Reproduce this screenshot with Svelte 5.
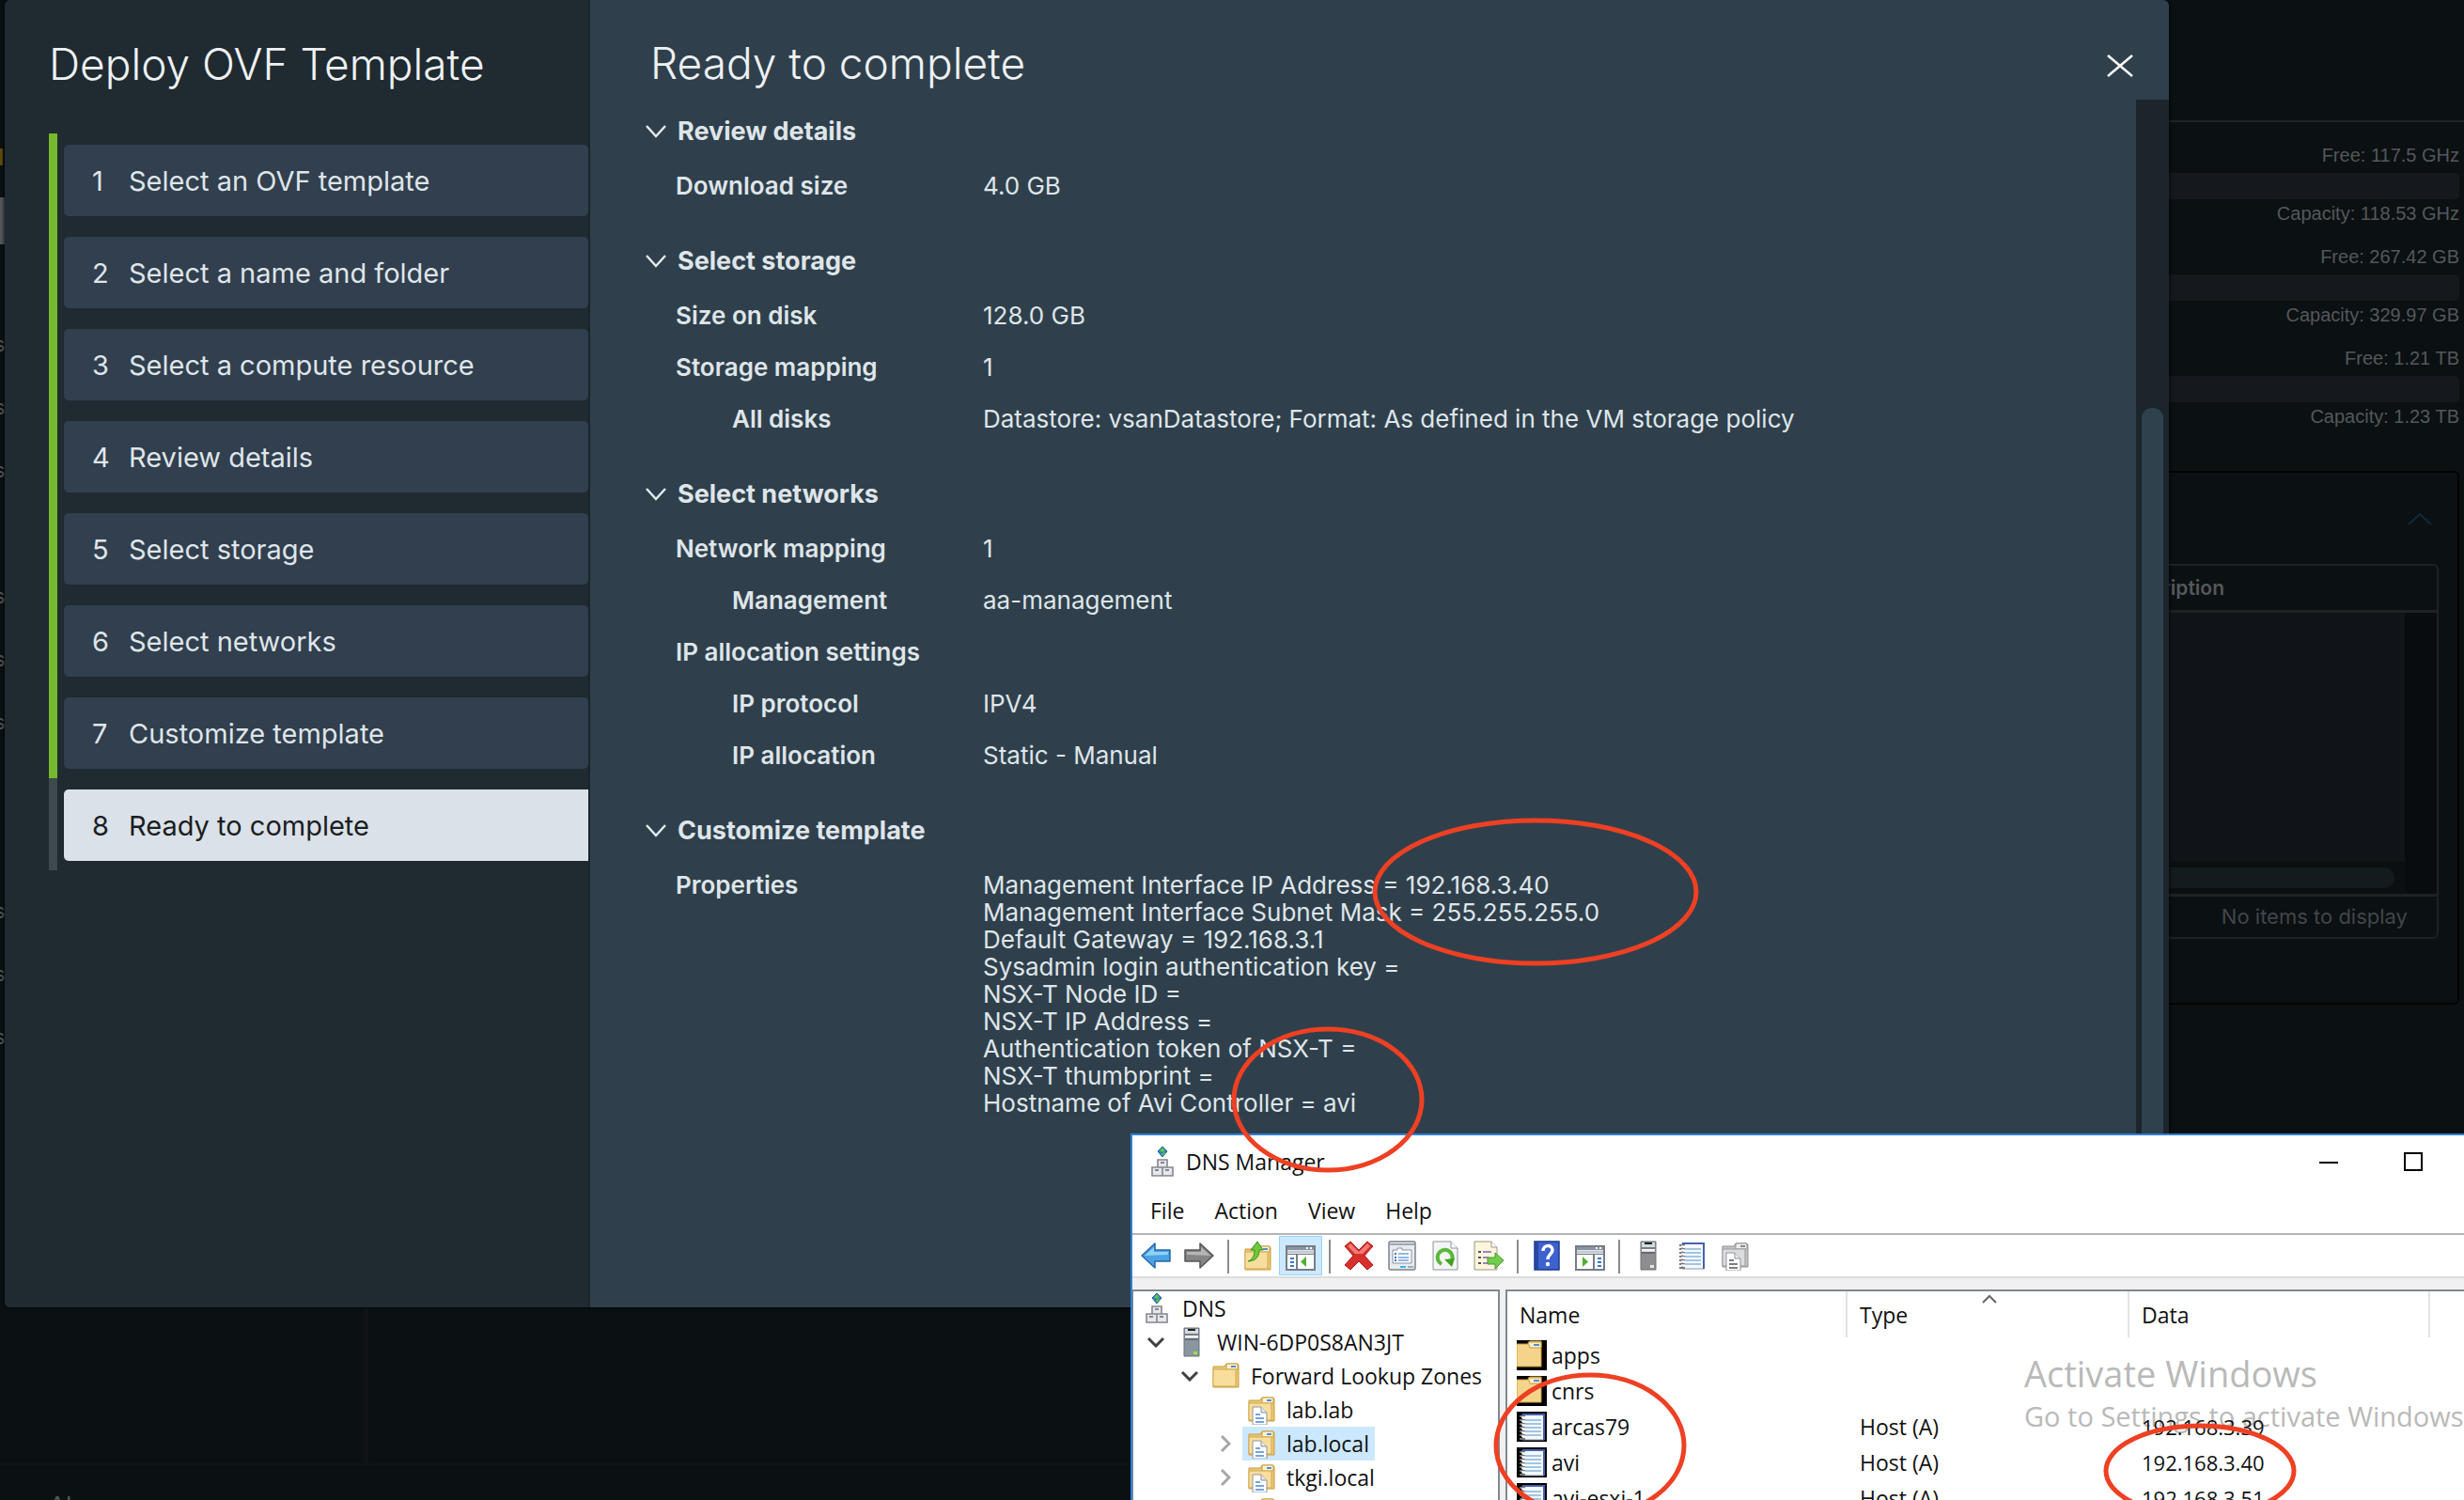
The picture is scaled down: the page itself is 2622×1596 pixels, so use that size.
<script>
  const steps = [
    'Select an OVF template',
    'Select a name and folder',
    'Select a compute resource',
    'Review details',
    'Select storage',
    'Select networks',
    'Customize template',
    'Ready to complete'
  ];
  let current = $state(8);

  const sections = [
    { title: 'Review details', rows: [{ label: 'Download size', value: ['4.0 GB'] }] },
    {
      title: 'Select storage',
      rows: [
        { label: 'Size on disk', value: ['128.0 GB'] },
        { label: 'Storage mapping', value: ['1'] },
        { label: 'All disks', nested: true, value: ['Datastore: vsanDatastore; Format: As defined in the VM storage policy'] }
      ]
    },
    {
      title: 'Select networks',
      rows: [
        { label: 'Network mapping', value: ['1'] },
        { label: 'Management', nested: true, value: ['aa-management'] },
        { label: 'IP allocation settings', value: [] },
        { label: 'IP protocol', nested: true, value: ['IPV4'] },
        { label: 'IP allocation', nested: true, value: ['Static - Manual'] }
      ]
    },
    {
      title: 'Customize template',
      rows: [
        {
          label: 'Properties',
          value: [
            'Management Interface IP Address = 192.168.3.40',
            'Management Interface Subnet Mask = 255.255.255.0',
            'Default Gateway = 192.168.3.1',
            'Sysadmin login authentication key =',
            'NSX-T Node ID =',
            'NSX-T IP Address =',
            'Authentication token of NSX-T =',
            'NSX-T thumbprint =',
            'Hostname of Avi Controller = avi'
          ]
        }
      ]
    }
  ];

  const inventory = ['s', 's', 's', '', 's', 's', 's', '', '', 's', 's', 's'];
  const usage = [
    { free: '117.5 GHz', capacity: '118.53 GHz' },
    { free: '267.42 GB', capacity: '329.97 GB' },
    { free: '1.21 TB', capacity: '1.23 TB' }
  ];

  const menus = ['File', 'Action', 'View', 'Help'];
  const toolbar = [
    ['back', 'forward'],
    ['up', 'tree'],
    ['delete', 'properties', 'refresh', 'export'],
    ['help', 'actions'],
    ['server-gray', 'notebook', 'zones-gray']
  ];
  const tree = [
    { level: 0, icon: 'dns', label: 'DNS', mark: '' },
    { level: 1, icon: 'server', label: 'WIN-6DP0S8AN3JT', mark: 'open' },
    { level: 2, icon: 'folder', label: 'Forward Lookup Zones', mark: 'open' },
    { level: 3, icon: 'zone', label: 'lab.lab', mark: '' },
    { level: 3, icon: 'zone', label: 'lab.local', mark: 'closed', selected: true },
    { level: 3, icon: 'zone', label: 'tkgi.local', mark: 'closed' },
    { level: 3, icon: 'zone', label: '', mark: '' }
  ];
  const records = [
    { icon: 'row-folder', name: 'apps', type: '', data: '' },
    { icon: 'row-folder', name: 'cnrs', type: '', data: '' },
    { icon: 'row-note', name: 'arcas79', type: 'Host (A)', data: '192.168.3.39' },
    { icon: 'row-note', name: 'avi', type: 'Host (A)', data: '192.168.3.40' },
    { icon: 'row-note', name: 'avi-esxi-1', type: 'Host (A)', data: '192.168.3.51' }
  ];
</script>

{#snippet folderShape(x, y, gray)}
  <g transform="translate({x} {y})">
    <path d="M2 5h12l2-3h11a2 2 0 0 1 2 2v23H2z" fill={gray ? '#c4c4c4' : '#eac875'} stroke={gray ? '#8f8f8f' : '#c79a3e'} />
    <rect x="16" y="2" width="12" height="6" rx="1" fill={gray ? '#eee' : '#fff3cf'} stroke={gray ? '#8f8f8f' : '#c79a3e'} />
    <rect x="21" y="4" width="5" height="2" fill={gray ? '#888' : '#4b8fdc'} />
    <path d="M2 8h24v18H2z" fill={gray ? '#dcdcdc' : '#f8de9c'} stroke={gray ? '#9a9a9a' : '#d2a850'} />
  </g>
{/snippet}

{#snippet noteShape()}
  <path d="M6 3h23v27H6z" fill="#f5f9fe" stroke="#8b93a8" />
  <path d="M6 3h23v27" fill="none" stroke="#4663b0" stroke-width="2" />
  <path d="M9 9h17M9 13h17M9 17h17M9 21h17M9 25h17" stroke="#86b4d8" stroke-width="1.4" />
  <path d="M3 5h6M3 9h6M3 13h6M3 17h6M3 21h6M3 25h6M3 29h6" stroke="#777" stroke-width="2" />
  <path d="M5 6h4M5 10h4M5 14h4M5 18h4M5 22h4M5 26h4" stroke="#fff" stroke-width="1.4" />
{/snippet}

{#snippet pageShape()}
  <path d="M12 12h9l6 6v13H12z" fill="#fff" stroke="#8e949c" />
  <path d="M21 12v6h6" fill="#e5e8ec" stroke="#8e949c" />
{/snippet}

{#snippet icon(name)}
  <svg class="icon" viewBox="0 0 32 32" aria-hidden="true">
    {#if name === 'back'}
      <path d="M1 16 15 3v7h16v12H15v7z" fill="#4ba3e3" stroke="#2668a8" stroke-width="1.5" stroke-linejoin="round" />
      <path d="M4 16 14 7v5h15v3z" fill="#8fd0f7" />
    {:else if name === 'forward'}
      <path d="M31 16 17 3v7H1v12h16v7z" fill="#858585" stroke="#555" stroke-width="1.5" stroke-linejoin="round" />
      <path d="M28 16 18 7v5H3v3z" fill="#b5b5b5" />
    {:else if name === 'up'}
      {@render folderShape(1, 4, false)}
      <path d="M6 22c5-2 7-6 7-12H9l7-9 6 9h-4c0 7-4 12-12 12z" fill="#6cc93d" stroke="#3c8c1d" />
    {:else if name === 'tree' || name === 'actions'}
      <path d="M1 6h30v25H1z" fill="#fff" stroke="#767d88" stroke-width="2" />
      <path d="M2 7h28v3H2z" fill="#8a94a5" />
      <path d="M22 8h2M26 8h2" stroke="#fff" stroke-width="2" />
      <path d="M2 12h28" stroke="#c3c9d2" stroke-width="3" />
      <path d="M2 14.500h28" stroke="#767d88" />
      {#if name === 'tree'}
        <path d="M12 15v15" stroke="#767d88" stroke-width="2" />
        <path d="M5 19h4M5 23h4M5 27h4" stroke="#3577c8" stroke-width="2" />
        <path d="m22 17-6 5.500 6 5.500z" fill="#4fb12b" />
      {:else}
        <path d="M20 15v15" stroke="#767d88" stroke-width="2" />
        <path d="M24 19h4M24 23h4M24 27h4" stroke="#3577c8" stroke-width="2" />
        <path d="m8 17 6 5.500-6 5.500z" fill="#4fb12b" />
      {/if}
    {:else if name === 'delete'}
      <path d="m7 1 9 9 9-9 6 5-9 10 9 10-6 5-9-9-9 9-6-5 9-10L1 6z" fill="#d92f2a" stroke="#a81d1b" stroke-linejoin="round" />
      <path d="m7 3 9 9 9-9 3 3-8 8h-8L4 6z" fill="#ee7c77" />
    {:else if name === 'properties'}
      <rect x="2" y="1" width="28" height="30" rx="2" fill="#e8ebef" stroke="#7c828c" stroke-width="1.500" />
      <path d="M3 4h26" stroke="#9fa7b3" stroke-width="2" />
      <path d="M6 10h5V8h5v2h10v14H6z" fill="#fff" stroke="#8990a0" />
      <path d="M12 14h11M12 18h11M12 21h11" stroke="#6fa0d8" stroke-width="1.500" />
      <path d="M8 14h2M8 18h2M8 21h2" stroke="#3577c8" stroke-width="2" />
      <path d="M14 28h6" stroke="#38b6e8" stroke-width="2" /><path d="M22 28h6" stroke="#a5acb8" stroke-width="2" />
    {:else if name === 'refresh'}
      <path d="M3 1h19l7 7v23H3z" fill="#f4f5f6" stroke="#8e949c" /><path d="M22 1v7h7" fill="#fff" stroke="#8e949c" />
      <path d="M12 25a8 8 0 1 1 11-4" fill="none" stroke="#58b838" stroke-width="4" />
      <path d="m15 20 11-1-3 9z" fill="#43a124" />
    {:else if name === 'export'}
      <path d="M1 1h18l6 6v24H1z" fill="#fbf5dc" stroke="#9c9880" /><path d="M19 1v6h6" fill="#fff" stroke="#9c9880" />
      <path d="M5 12h3M5 18h3M5 24h3" stroke="#555" stroke-width="2" /><path d="M10 12h9M10 18h6M10 24h6" stroke="#9a88c0" stroke-width="2" />
      <path d="M15 18h8v-5l9 8-9 9v-5h-8z" fill="#72ce4d" stroke="#46982a" />
    {:else if name === 'help'}
      <path d="M3 1h26v30H3z" fill="#3d62cf" stroke="#20398c" stroke-width="1.500" /><path d="M4 2h3v28H4z" fill="#2746a5" />
      <path d="M12 11c0-7 10-7 10-1 0 4-5 5-5 10" fill="none" stroke="#fff" stroke-width="3.500" /><circle cx="17" cy="25" r="2.200" fill="#fff" />
    {:else if name === 'server' || name === 'server-gray'}
      <path d="M8 1h16v30H8z" fill={name === 'server' ? '#8996a0' : '#8e8e8e'} stroke="#6a7178" />
      <path d="M9 2h14v10H9z" fill="#d5dade" />
      <path d="M12 3h8" stroke="#222" stroke-width="2" /><path d="M9 8h14M9 13h14" stroke="#5b6066" stroke-width="1.500" />
      <path d="M9 10h14" stroke="#fff" stroke-width="1.500" />
      <rect x="18" y="26" width="4" height="3" fill={name === 'server' ? '#8eea3b' : '#e8e8e8'} />
    {:else if name === 'notebook'}
      {@render noteShape()}
    {:else if name === 'zones-gray' || name === 'zone'}
      {@render folderShape(1, 1, name === 'zones-gray')}
      <g transform="translate(-5 1)">
        {@render pageShape()}
        <path d="M15 20h5M15 24h9M15 28h9" stroke={name === 'zone' ? '#4b86cf' : '#555'} stroke-width="1.600" />
      </g>
    {:else if name === 'folder'}
      {@render folderShape(1, 1, false)}
    {:else if name === 'dns'}
      <path d="m16 0 5 5-5 6-5-6z" fill="#2a86c8" stroke="#1f5d8c" /><path d="m13 4 3-3 3 3-3 2zM15 8l3-2 1 1-3 3z" fill="#5fc83c" />
      <path d="M11 14h10v8H11zM5 22h11v9H5zM16 22h11v9H16z" fill="#e6e7ec" stroke="#85868f" stroke-width="1.600" />
      <path d="M14 17h4M8 25h4M19 25h4" stroke="#85868f" stroke-width="2" />
    {:else if name === 'row-folder'}
      <path d="M0 0h32v32H0z" fill="#000" />
      <path d="M0 4h12l2-3h12v27H0z" fill="#f3d48a" stroke="#c79a3e" />
      <path d="M12 2h14v6H14z" fill="#fff0c6" stroke="#c79a3e" /><path d="M18 5h6" stroke="#4b8fdc" stroke-width="2" />
    {:else if name === 'row-note'}
      <path d="M0 0h32v32H0z" fill="#000" />
      {@render noteShape()}
    {/if}
  </svg>
{/snippet}

<div class="desktop">
  <div class="backdrop">
    <div class="panes">
      <nav class="inventory" aria-label="Inventory">
        <span class="mark"></span>
        <span class="thumb"></span>
        <ul>
          {#each inventory as item}<li>{item}</li>{/each}
        </ul>
      </nav>
      <aside class="summary">
        <div class="usage">
          {#each usage as item}
            <div class="meter">
              <p>Free: {item.free}</p>
              <div class="track"></div>
              <p>Capacity: {item.capacity}</p>
            </div>
          {/each}
        </div>
        <section class="card">
          <button class="collapse" aria-label="Collapse">
            <svg viewBox="0 0 26 14" width="26" height="14"><path d="M1 13 13 2l12 11" fill="none" stroke="#0f2c3d" stroke-width="2" /></svg>
          </button>
          <div class="datagrid">
            <div class="grid-head">Description</div>
            <div class="grid-body"><div class="hbar"><span></span></div><div class="vbar"></div></div>
            <div class="grid-foot">No items to display</div>
          </div>
        </section>
      </aside>
    </div>
    <footer class="alarms">Alarms</footer>
  </div>

  <div class="wizard" role="dialog" aria-label="Deploy OVF Template">
    <aside class="steps">
      <h1>Deploy OVF Template</h1>
      <ol>
        {#each steps as step, i}
          <li class:done={i < 7}>
            <button class:active={current === i + 1} onclick={() => (current = i + 1)}>
              <span class="num">{i + 1}</span>{step}
            </button>
          </li>
        {/each}
      </ol>
    </aside>
    <main>
      <header>
        <h2>Ready to complete</h2>
        <button class="close" aria-label="Close">
          <svg viewBox="0 0 28 24" width="28" height="24"><path d="m1 1 26 22M27 1 1 23" stroke="#fff" stroke-width="2.500" /></svg>
        </button>
      </header>
      <div class="scroller">
        <div class="review">
          {#each sections as section}
            <section>
              <button class="heading">
                <svg viewBox="0 0 22 16" width="22" height="16"><path d="m1 2 10 11L21 2" fill="none" stroke="#e4eaee" stroke-width="2.500" /></svg>
                {section.title}
              </button>
              <dl>
                {#each section.rows as row}
                  <div class="row">
                    <dt class:nested={row.nested}>{row.label}</dt>
                    <dd>{#each row.value as line}<div>{line}</div>{/each}</dd>
                  </div>
                {/each}
              </dl>
            </section>
          {/each}
        </div>
        <div class="scrollbar"><span></span></div>
      </div>
    </main>
  </div>

  <div class="dns">
    <div class="titlebar">
      {@render icon('dns')}
      <span class="caption">DNS Manager</span>
      <button aria-label="Minimize"><svg viewBox="0 0 20 20" width="20" height="20"><path d="M0 11h20" stroke="#000" stroke-width="2" /></svg></button>
      <button aria-label="Maximize"><svg viewBox="0 0 20 20" width="20" height="20"><path d="M1 1h18v18H1z" fill="none" stroke="#000" stroke-width="2" /></svg></button>
    </div>
    <div class="menubar">
      {#each menus as menu}<button>{menu}</button>{/each}
    </div>
    <div class="toolbar">
      {#each toolbar as group}
        <div class="group">
          {#each group as name}
            <button class:pressed={name === 'tree'} aria-label={name}>{@render icon(name)}</button>
          {/each}
        </div>
      {/each}
    </div>
    <div class="split">
      <ul class="tree">
        {#each tree as node}
          <li class="level{node.level}">
            <span class="twisty">
              {#if node.mark === 'open'}
                <svg viewBox="0 0 20 12" width="20" height="12"><path d="m2 2 8 8 8-8" fill="none" stroke="#404040" stroke-width="3" /></svg>
              {:else if node.mark === 'closed'}
                <svg viewBox="0 0 12 20" width="12" height="20"><path d="m2 2 8 8-8 8" fill="none" stroke="#a6a6a6" stroke-width="3" /></svg>
              {/if}
            </span>
            <span class="node" class:selected={node.selected}>{@render icon(node.icon)}{node.label}</span>
          </li>
        {/each}
      </ul>
      <div class="list">
        <div class="watermark">
          <p class="big">Activate Windows</p>
          <p>Go to Settings to activate Windows.</p>
        </div>
        <table>
          <colgroup><col class="c-name" /><col class="c-type" /><col class="c-data" /><col /></colgroup>
          <thead>
            <tr>
              <th>Name</th>
              <th class="sorted">Type<svg viewBox="0 0 16 10" width="16" height="10"><path d="m1 9 7-7 7 7" fill="none" stroke="#666" stroke-width="2" /></svg></th>
              <th>Data</th>
              <td></td>
            </tr>
          </thead>
          <tbody>
            {#each records as record}
              <tr>
                <td><span class="cell">{@render icon(record.icon)}{record.name}</span></td>
                <td>{record.type}</td>
                <td class="address">{record.data}</td>
                <td></td>
              </tr>
            {/each}
          </tbody>
        </table>
      </div>
    </div>
  </div>

  <svg class="annotations" aria-hidden="true">
    <ellipse cx="1634" cy="949" rx="171" ry="76" />
    <ellipse cx="1413" cy="1170" rx="100" ry="75" />
    <ellipse cx="1692" cy="1538" rx="100" ry="75" />
    <ellipse cx="2341" cy="1565" rx="100" ry="48" />
  </svg>
</div>

<style>
  :global(body) { margin: 0; overflow: hidden; background: #0b1012; }
  * { box-sizing: border-box; }
  h1, h2, p, ul, ol, dl, dd { margin: 0; padding: 0; }
  ul, ol { list-style: none; }
  button { border: 0; background: none; padding: 0; font: inherit; color: inherit; text-align: left; }
  svg { display: block; flex: none; }

  .desktop { position: relative; height: 100vh; overflow: hidden; font-family: Inter, 'Liberation Sans', sans-serif; }

  /* Dimmed page behind the wizard */
  .backdrop { display: flex; flex-direction: column; height: 100%; background: #0b1012; color: #54585b; }
  .panes { display: flex; flex: 1; min-height: 0; }
  .inventory { flex: none; width: 392px; border-right: 5px solid #0f1317; font-size: 22px; }
  .mark { display: block; width: 3px; height: 18px; margin-top: 158px; background: #5c4a0c; }
  .thumb { display: block; width: 8px; height: 50px; margin-top: 34px; background: #55585b; }
  .inventory ul { margin: 73px 0 0 -6px; }
  .inventory li { height: 67px; line-height: 67px; }
  .summary { flex: 1; min-width: 0; padding: 128px 5px 0 0; }
  .usage { border-top: 2px solid #202529; padding-top: 23px; margin-right: -5px; padding-right: 5px; }
  .meter { height: 108px; text-align: right; font: 20px/24px 'Liberation Sans', sans-serif; }
  .track { height: 28px; margin: 7px 0 3px; border-radius: 5px; background: #15191d; }
  .card { height: 568px; margin-top: 24px; padding: 42px 20px 0 0; border: 2px solid #020303; border-radius: 6px; }
  .collapse { display: block; margin: 0 7px 0 auto; }
  .datagrid { height: 399px; margin-top: 41px; border: 2px solid #1d2225; border-radius: 6px; display: flex; flex-direction: column; }
  .grid-head { height: 50px; padding-right: 226px; border-bottom: 3px solid #1d2225; font-size: 21px; line-height: 48px; font-weight: 600; text-align: right; }
  .grid-body { flex: 1; display: grid; grid-template-columns: 1fr 34px; background: #101418; align-items: end; }
  .vbar { height: 100%; background: #090c0f; }
  .hbar { height: 34px; padding: 6px 11px 6px 0; background: #0b0f11; }
  .hbar span { display: block; height: 22px; border-radius: 0 11px 11px 0; background: #141b1e; }
  .grid-foot { height: 46px; padding-right: 31px; border-top: 3px solid #1d2225; font-size: 22px; line-height: 42px; text-align: right; color: #42464a; }
  .alarms { flex: none; height: 39px; padding: 27px 52px 0; border-top: 2px solid #101418; font-size: 26px; line-height: 32px; overflow: hidden; }

  /* Wizard dialog */
  .wizard { position: absolute; inset: 0 314px 205px 5px; display: flex; border-radius: 6px; overflow: hidden; background: #2f404c; color: #dfe5e9; box-shadow: 0 0 4px #000; }
  .steps { flex: none; width: 623px; padding: 42px 0 0 47px; background: #1f2a31; border-right: 2px solid #1a242b; }
  h1, h2 { font-weight: 300; font-size: 46px; line-height: 52px; color: #eef1f3; white-space: nowrap; }
  .steps ol { margin-top: 48px; }
  .steps li { height: 98px; padding: 12px 0 10px 7px; border-left: 9px solid #3d494d; }
  .steps li.done { border-color: #76b82f; }
  .steps button { display: flex; align-items: center; width: 100%; height: 76px; padding-left: 30px; border-radius: 5px; background: #313f4e; font-size: 29px; white-space: nowrap; }
  .steps button.active { border-radius: 5px 0 0 5px; background: #dae1e8; color: #1b1d1f; }
  .num { width: 39px; }
  main { flex: 1; min-width: 0; display: flex; flex-direction: column; }
  header { flex: none; display: flex; justify-content: space-between; align-items: center; height: 106px; padding: 28px 38px 0 64px; }
  .close { padding-top: 6px; }
  .scroller { flex: 1; min-height: 0; display: flex; justify-content: space-between; }
  .review { padding: 3px 0 0 59px; }
  .heading { display: flex; align-items: center; gap: 12px; height: 61px; font-size: 27px; font-weight: 700; }
  section + section { margin-top: 22px; }
  .row { display: grid; grid-template-columns: 327px auto; padding: 13px 0; margin-left: 32px; font-size: 26px; line-height: 29px; min-height: 55px; }
  dt { font-weight: 600; white-space: nowrap; }
  dt.nested { padding-left: 60px; }
  dd { white-space: nowrap; }
  .scrollbar { width: 35px; padding: 328px 6px 0; background: #1b252b; }
  .scrollbar span { display: block; height: 100%; border-radius: 11px 11px 0 0; background: #2f414d; }

  /* DNS Manager window */
  .dns { position: absolute; inset: 1206px 0 0 1203px; display: flex; flex-direction: column; border: solid #2f7fd6; border-width: 2px 0 0 2px; background: #fff; color: #111; font-family: 'Open Sans', 'Noto Sans', sans-serif; font-size: 23px; overflow: hidden; }
  .icon { width: 32px; height: 32px; }
  .titlebar { flex: none; display: flex; align-items: center; height: 55px; padding: 0 44px 0 16px; }
  .caption { flex: 1; padding-left: 9px; }
  .titlebar button + button { margin-left: 70px; }
  .menubar { flex: none; display: flex; gap: 32px; height: 49px; padding-left: 19px; line-height: 48px; }
  .toolbar { flex: none; display: flex; height: 48px; border: solid #b4b4b4; border-width: 2px 0; border-bottom-color: #dcdcdc; padding-left: 2px; }
  .group { display: flex; align-items: center; padding-right: 7px; }
  .group + .group { padding-left: 9px; position: relative; }
  .group + .group::before { content: ''; position: absolute; left: 0; top: 5px; height: 36px; border-left: 2px solid #8c8c8c; }
  .group button { display: grid; place-items: center; width: 46px; height: 42px; border: 1px solid transparent; }
  .group button.pressed { background: #cce8ff; border-color: #99d1ff; }
  .split { flex: 1; min-height: 0; display: grid; grid-template-columns: 391px 1fr; gap: 6px; padding-top: 12px; background: #f0f0f0; }
  .tree, .list { border: 2px solid #828790; border-bottom: 0; background: #fff; overflow: hidden; }
  .tree { border-left-width: 1px; }
  .tree li { display: flex; align-items: center; height: 36px; white-space: nowrap; }
  .twisty { display: grid; place-items: center; width: 28px; margin-right: 4px; }
  .node { display: flex; align-items: center; gap: 11px; height: 36px; padding: 0 6px 0 4px; }
  .selected { background: #cce8ff; }
  .level0 { margin-left: -27px; }
  .level1 { margin-left: 10px; }
  .level2 { margin-left: 46px; }
  .level3 { margin-left: 84px; }
  .list { position: relative; border-right: 0; }
  table { position: relative; width: 100%; table-layout: fixed; border-collapse: separate; border-spacing: 0; }
  .c-name { width: 362px; }
  .c-type { width: 300px; }
  .c-data { width: 320px; }
  th, td { padding: 0 0 0 13px; font-weight: 400; text-align: left; white-space: nowrap; }
  th { position: relative; height: 49px; border-right: 2px solid #e3e3e3; }
  .sorted svg { position: absolute; top: 3px; left: 143px; }
  tbody td { height: 38px; }
  .address { font-size: 22px; }
  .cell { display: flex; align-items: center; gap: 5px; margin-left: -3px; }
  .watermark { position: absolute; top: 61px; left: 550px; font-size: 29px; line-height: 40px; color: #b9b9b9; white-space: nowrap; }
  .watermark .big { font-size: 38px; line-height: 52px; }

  .annotations { position: absolute; inset: 0; width: 100%; height: 100%; pointer-events: none; }
  .annotations ellipse { fill: none; stroke: #ee4023; stroke-width: 5; }
</style>
